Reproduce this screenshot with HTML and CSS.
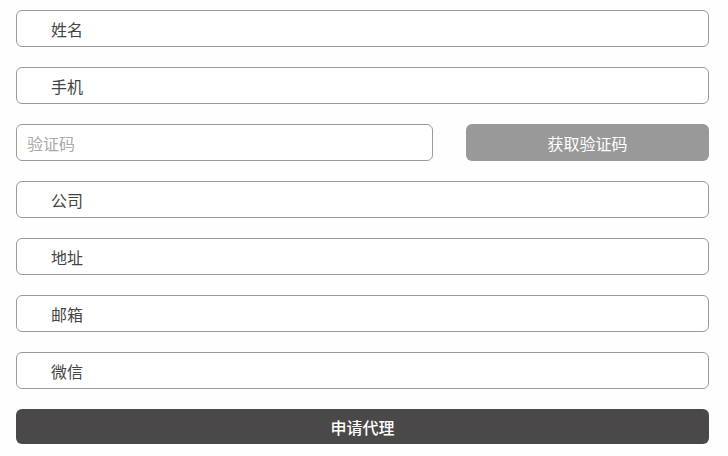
FILE: index.html
```html
<!DOCTYPE html>
<html lang="zh">
<head>
<meta charset="utf-8">
<link rel="stylesheet" href="styles.css">
</head>
<body>
<form class="form">
  <div class="field"><span class="label">姓名</span></div>
  <div class="field"><span class="label">手机</span></div>
  <div class="code-row">
    <div class="field code"><span class="placeholder">验证码</span></div>
    <div class="get-code">获取验证码</div>
  </div>
  <div class="field"><span class="label">公司</span></div>
  <div class="field"><span class="label">地址</span></div>
  <div class="field"><span class="label">邮箱</span></div>
  <div class="field"><span class="label">微信</span></div>
  <div class="submit">申请代理</div>
</form>
</body>
</html>
```
FILE: styles.css
```css
html, body {
  margin: 0;
  padding: 0;
  background: #fefefe;
}
body {
  font-family: "Noto Sans CJK SC", "Liberation Sans", sans-serif;
  font-size: 16px;
}
.form {
  display: flex;
  flex-direction: column;
  gap: 20px;
  padding: 10px 19px 0 16px;
}
.field {
  box-sizing: border-box;
  height: 37px;
  border: 1px solid #9a9a9a;
  border-radius: 6px;
  background: #fff;
  display: flex;
  align-items: center;
  padding-left: 34px;
}
.label {
  color: #444;
  line-height: 1;
}
.code-row {
  display: flex;
  gap: 33px;
}
.field.code {
  width: 417px;
  padding-left: 10px;
}
.placeholder {
  color: #a9a9a9;
  line-height: 1;
}
.get-code {
  flex: 1;
  height: 37px;
  border-radius: 6px;
  background: #9a9999;
  color: #fff;
  display: flex;
  align-items: center;
  justify-content: center;
}
.submit {
  height: 35px;
  border-radius: 6px;
  background: #4a4848;
  color: #fff;
  font-weight: 500;
  display: flex;
  align-items: center;
  justify-content: center;
}
```
